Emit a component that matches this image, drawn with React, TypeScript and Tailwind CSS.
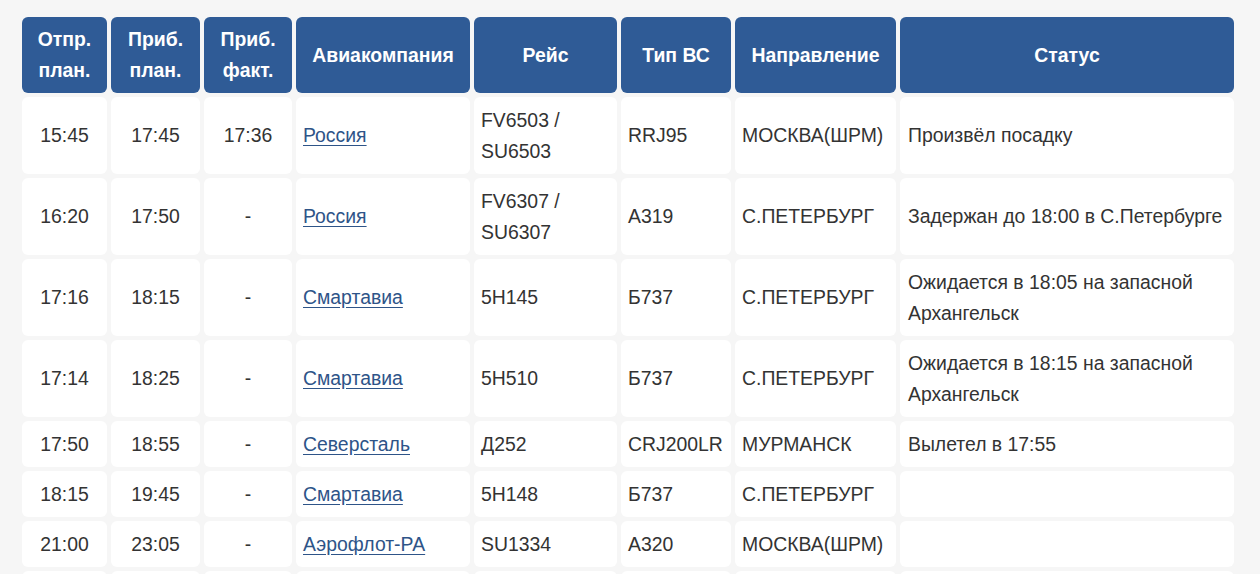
import React from 'react';

interface Flight {
  dep: string;
  arrPlan: string;
  arrFact: string;
  airline: string;
  flight: string[];
  plane: string;
  dest: string;
  status: string[];
}

const headers: string[][] = [
  ['Отпр.', 'план.'],
  ['Приб.', 'план.'],
  ['Приб.', 'факт.'],
  ['Авиакомпания'],
  ['Рейс'],
  ['Тип ВС'],
  ['Направление'],
  ['Статус'],
];

const flights: Flight[] = [
  { dep: '15:45', arrPlan: '17:45', arrFact: '17:36', airline: 'Россия', flight: ['FV6503 /', 'SU6503'], plane: 'RRJ95', dest: 'МОСКВА(ШРМ)', status: ['Произвёл посадку'] },
  { dep: '16:20', arrPlan: '17:50', arrFact: '-', airline: 'Россия', flight: ['FV6307 /', 'SU6307'], plane: 'A319', dest: 'С.ПЕТЕРБУРГ', status: ['Задержан до 18:00 в С.Петербурге'] },
  { dep: '17:16', arrPlan: '18:15', arrFact: '-', airline: 'Смартавиа', flight: ['5H145'], plane: 'Б737', dest: 'С.ПЕТЕРБУРГ', status: ['Ожидается в 18:05 на запасной', 'Архангельск'] },
  { dep: '17:14', arrPlan: '18:25', arrFact: '-', airline: 'Смартавиа', flight: ['5H510'], plane: 'Б737', dest: 'С.ПЕТЕРБУРГ', status: ['Ожидается в 18:15 на запасной', 'Архангельск'] },
  { dep: '17:50', arrPlan: '18:55', arrFact: '-', airline: 'Северсталь', flight: ['Д252'], plane: 'CRJ200LR', dest: 'МУРМАНСК', status: ['Вылетел в 17:55'] },
  { dep: '18:15', arrPlan: '19:45', arrFact: '-', airline: 'Смартавиа', flight: ['5H148'], plane: 'Б737', dest: 'С.ПЕТЕРБУРГ', status: [] },
  { dep: '21:00', arrPlan: '23:05', arrFact: '-', airline: 'Аэрофлот-РА', flight: ['SU1334'], plane: 'A320', dest: 'МОСКВА(ШРМ)', status: [] },
];

const cell = 'bg-white rounded-[6px] px-[7px] py-[7.5px] flex items-center';

const Lines: React.FC<{ lines: string[] }> = ({ lines }) => (
  <div>
    {lines.map((l, i) => (
      <div key={i}>{l}</div>
    ))}
  </div>
);

export default function App() {
  return (
    <div className="min-h-screen bg-[#f6f6f6] pt-[17px] pl-[22px]" style={{ fontFamily: '"Liberation Sans", Arial, sans-serif' }}>
      <div className="grid grid-cols-[85px_89px_88px_174px_143px_110px_161px_334px] gap-[4px] w-[1212px] text-[19.4px] leading-[31px] text-[#333]">
        {headers.map((h, i) => (
          <div key={i} className="bg-[#2f5b96] rounded-[6px] py-[7px] px-1 flex items-center justify-center text-center text-white font-bold text-[19.4px] leading-[31px]">
            <Lines lines={h} />
          </div>
        ))}
        {flights.map((f, i) => (
          <React.Fragment key={i}>
            <div className={`${cell} justify-center`}>{f.dep}</div>
            <div className={`${cell} justify-center`}>{f.arrPlan}</div>
            <div className={`${cell} justify-center`}>{f.arrFact}</div>
            <div className={cell}>
              <a href="#" className="text-[#2e5488] underline underline-offset-[3px]">{f.airline}</a>
            </div>
            <div className={cell}><Lines lines={f.flight} /></div>
            <div className={cell}>{f.plane}</div>
            <div className={cell}>{f.dest}</div>
            <div className={`${cell} px-[8px]`}><Lines lines={f.status} /></div>
          </React.Fragment>
        ))}
        {/* next row, only its top edge is in view */}
        {Array.from({ length: 8 }).map((_, i) => (
          <div key={`n${i}`} className="bg-white rounded-[6px] h-[46px]" />
        ))}
      </div>
    </div>
  );
}
